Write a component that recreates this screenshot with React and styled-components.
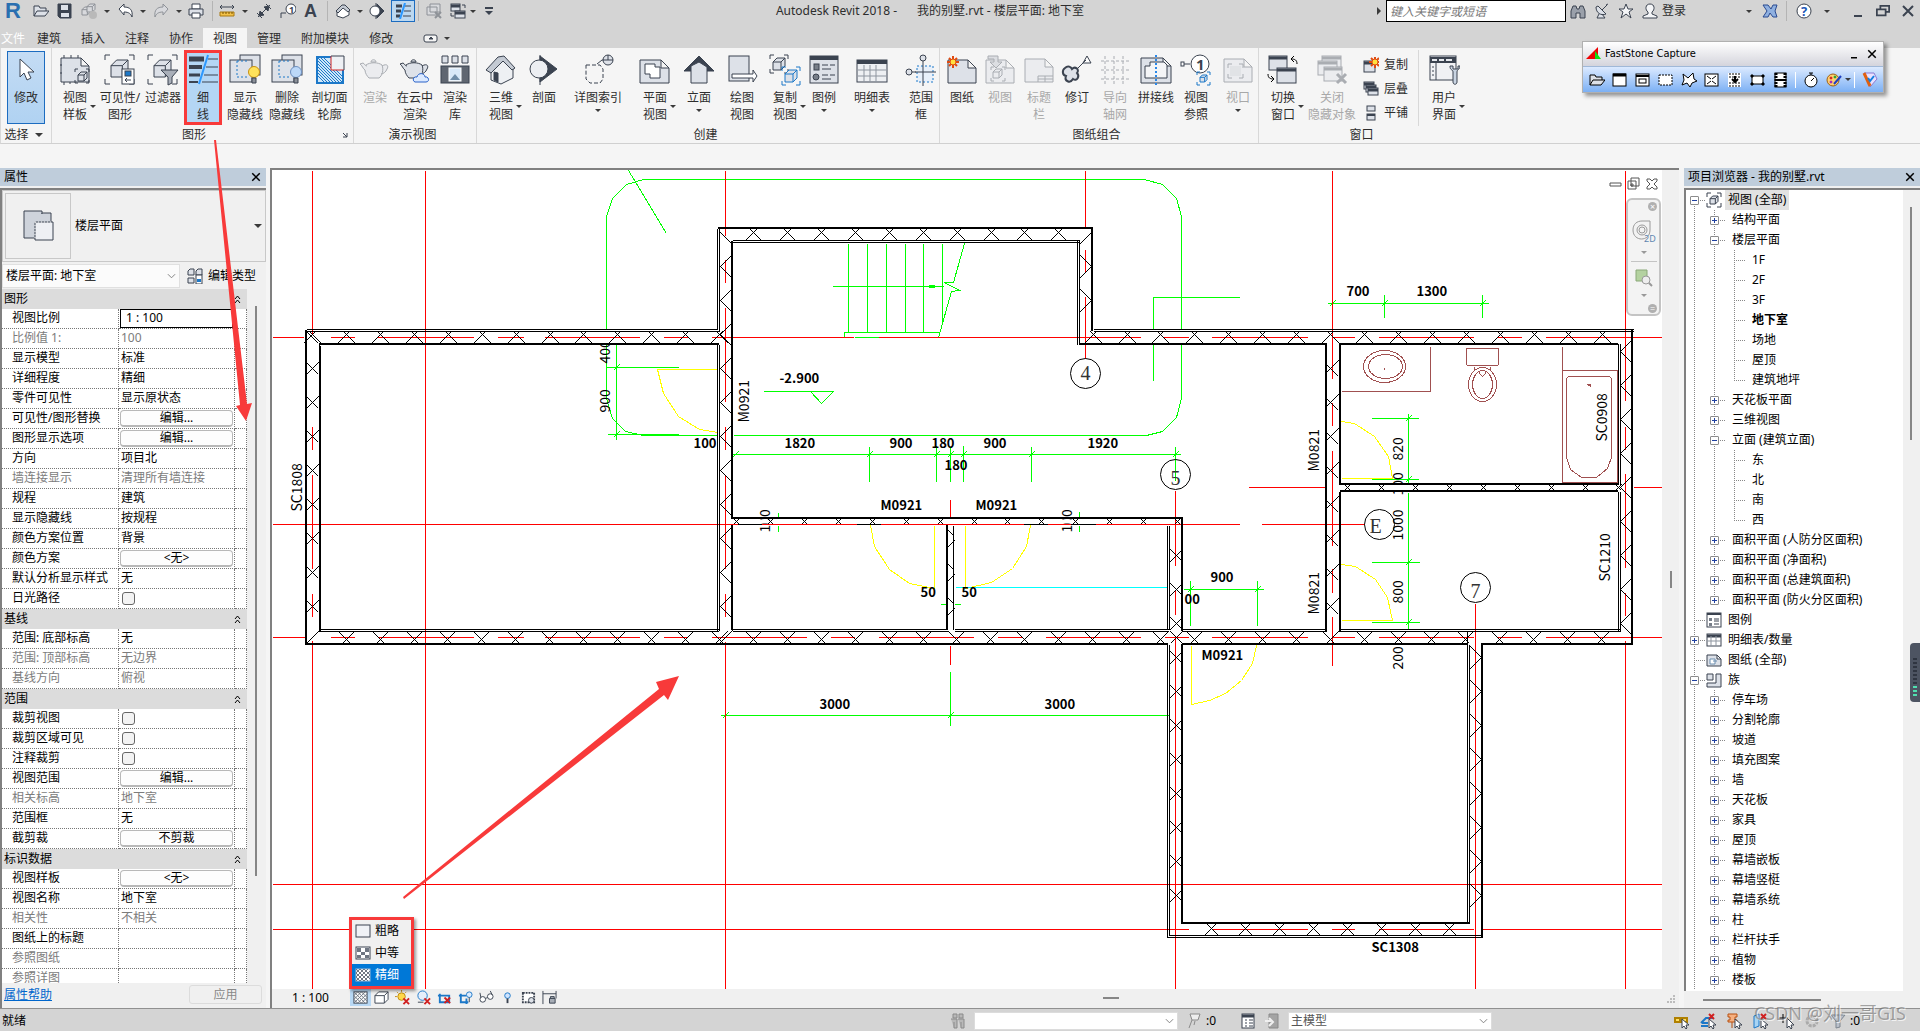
import { Fragment } from "react";
import styled, { createGlobalStyle, css } from "styled-components";

const INK = "#3b4350";
const FILL = "#dde1e8";
const BLUE = "#1c78c8";
const RED = "#f83a3a";

/* ---------- icons ---------- */

const sun = (x, y) => (
  <g transform={`translate(${x} ${y})`}>
    <path d="M0-6V6M-6 0H6M-4-4 4 4M-4 4 4-4" stroke="#e04a10" strokeWidth="2" />
    <circle r="3" fill="#ffe040" stroke="#e04a10" />
  </g>
);
const sheet = (x, y, w, h) => (
  <path d={`M${x} ${y}h${w - 8}l8 8v${h - 8}h${-w}zM${x + w - 8} ${y}v8h8`} fill={FILL} />
);
const bulb = (fill) => (
  <g>
    <circle cx="25" cy="18" r="5.5" fill={fill} stroke={fill === "#ffe25a" ? "#c89010" : "#6d8fc0"} />
    <path d="M23 24h4v5h-4z" fill="#8a8f98" />
  </g>
);
const corners = (x, y, w, h, s) => (
  <path
    d={`M${x} ${y + s}v${-s}h${s}M${x + w - s} ${y}h${s}v${s}M${x + w} ${y + h - s}v${s}h${-s}M${x + s} ${y + h}h${-s}v${-s}`}
    fill="none"
  />
);
const cube = (x, y, s) => (
  <path
    d={`M${x} ${y + s / 3}l${s / 3} ${-s / 3}h${(s * 2) / 3}v${(s * 2) / 3}l${-s / 3} ${s / 3}h${(-s * 2) / 3}zM${x} ${y + s / 3}h${(s * 2) / 3}v${(s * 2) / 3}m0 ${(-s * 2) / 3}l${s / 3} ${-s / 3}`}
    fill={FILL}
  />
);
const win = (x, y, w, h) => (
  <g>
    <rect x={x} y={y} width={w} height={h} fill={FILL} />
    <path d={`M${x} ${y + 2}h${w}`} strokeWidth="3" />
  </g>
);
const teapot = (
  <path d="M7 11c4-3 12-3 16 0 2 5 0 11-3 13H10C8 22 6 19 6 16 4 15 3 11 1 10l3-1c2 1 2 3 4 3M23 12c5-3 7 0 5 3-1 3-4 5-6 5M12 8c0-3 5-3 5 0z" fill={FILL} />
);

const big = {
  cursor: <path d="M10 5v18l4-4 3 7 4-2-3-6h6z" fill="#fff" />,
  template: <>{sheet(2, 4, 28, 24)}<path d="M5 1v3M12 1v3M19 1v3M2 10v2M2 18v2M5 28v3M11 28v2" />{corners(16, 15, 14, 14, 3)}{cube(19, 18, 9)}</>,
  visibility: <>{corners(1, 1, 29, 29, 5)}{cube(7, 6, 17)}<rect x="18" y="15" width="12" height="15" fill="#fff" /><rect x="21" y="17" width="6" height="5" fill={BLUE} /><path d="M21 26h6m-6 0 2-2m-2 2 2 2" /></>,
  filter: <>{corners(1, 1, 29, 29, 5)}{cube(7, 6, 17)}<path d="M14 16h17l-6 7v6l-4 2v-8z" fill="#a9afb9" /></>,
  thin: <><path d="M2 5h15" strokeWidth="5" /><path d="M2 13h13" strokeWidth="4" /><path d="M2 21h11" strokeWidth="3" /><path d="M2 28h9" strokeWidth="2" /><path d="M21 5h10M19 13h12M17 21h14M15 28h16" /><path d="M21 1 12 30" stroke="#2b98ff" strokeWidth="2" /></>,
  showHidden: <><rect x="11" y="1" width="20" height="20" fill={FILL} /><rect x="1" y="6" width="22" height="22" fill={FILL} /><path d="M8 7v16h12M8 7h12" strokeDasharray="2 2" stroke={BLUE} />{bulb("#ffe25a")}</>,
  removeHidden: <><rect x="11" y="1" width="20" height="20" fill={FILL} /><rect x="1" y="6" width="22" height="22" fill={FILL} /><path d="M8 7v16h12M8 7h12" strokeDasharray="2 2" stroke={BLUE} />{bulb("#bcd8f8")}</>,
  cutProfile: <><rect x="3" y="3" width="26" height="26" fill="#cfe6f8" stroke={BLUE} strokeWidth="2" /><path d="M4 10 22 28M4 4 28 28M4 16 16 28M4 22 10 28M10 4 28 22M4 7 25 28M4 13 19 28M4 19 13 28M7 4 28 25" stroke={BLUE} /><path d="M17 2h13v14H17z" fill="#eef0f4" stroke="none" /><path d="M17 2v14h13" stroke="#d02020" /><path d="M17 2h13v14" fill="none" /></>,
  teapot,
  cloud: <>{teapot}<path d="M16 28c-3-1-2-6 2-5 1-5 8-4 8 0 4-1 5 5 1 5z" fill="#dbe9ff" stroke="#2a62c8" /></>,
  gallery: <><path d="M3 2h6v7H3zM13 2h6v7h-6zM23 2h6v7h-6z" fill={FILL} /><rect x="2" y="12" width="28" height="17" fill="#5f6671" /><rect x="10" y="14" width="12" height="13" fill="#d8e8f8" stroke="#fff" /><path d="m11 26 5-6 5 6z" fill="#6f8ca8" stroke="none" /></>,
  house: <><path d="M6 15v11l10 4 12-6V13L18 6z" fill="#eef0f3" /><path d="M1 16 13 3l6-1 11 12-3 2-9-9-12 12z" fill="#c4cad3" /><path d="M9 18l4 1v9l-4-2z" fill={INK} /></>,
  section: <><path d="M12 1v30M12 2l17 13-17 13z" fill={INK} /><circle cx="11" cy="15" r="9" fill="#eceef2" /></>,
  callout: <><path d="M4 11h14l3 4v10l-3 4H8l-4-4z" fill="none" strokeDasharray="4 2" /><path d="M15 10l5-4h4" fill="none" /><circle cx="26" cy="6" r="5" fill={FILL} /><path d="M21 6h10M26 1v5" /></>,
  plan: <>{sheet(1, 6, 29, 23)}<path d="M6 10h10v3h5v11H11v-4H6z" fill="#fff" /></>,
  elevation: <><path d="M1 17 16 2l15 15z" fill={INK} /><path d="M8 17V12l8-4 8 5v16H8z" fill={FILL} /></>,
  drafting: <><rect x="3" y="2" width="20" height="25" fill={FILL} /><path d="M6 20h21v-4l4 6-4 6v-4H6z" fill="#fff" /></>,
  copyView: <>{corners(1, 1, 18, 18, 4)}{cube(4, 4, 12)}<g stroke={BLUE}>{corners(13, 13, 18, 18, 4)}{cube(16, 16, 12)}</g></>,
  legend: <><rect x="2" y="2" width="28" height="27" fill={FILL} /><path d="M2 4h28" strokeWidth="4" /><rect x="6" y="10" width="5" height="6" fill="#777e89" /><circle cx="8" cy="23" r="3" fill="#777e89" /><path d="M14 11h6m2 0h5M14 15h9M14 21h6m2 0h5M14 25h9" /></>,
  schedule: <><rect x="1" y="6" width="30" height="22" fill="#eef0f3" /><path d="M1 8h30" strokeWidth="4" /><path d="M2 16h28M2 22h28M8 11v17M20 11v17M14 11v17" stroke="#8e959f" /></>,
  scopeBox: <><rect x="12" y="12" width="16" height="16" fill="#e8f0fa" stroke={BLUE} strokeDasharray="2 2" /><path d="M18 10v22M10 18h21M18 6v4M7 18h4" /><circle cx="18" cy="4" r="3" fill={FILL} /><circle cx="4" cy="18" r="3" fill={FILL} /></>,
  newSheet: <>{sheet(2, 6, 28, 23)}{sun(7, 8)}</>,
  placeView: <>{sheet(2, 6, 28, 23)}<path d="M4 2h10v6h4l-6 6-6-6h4V5H4z" fill="#b9bec6" />{corners(7, 13, 14, 14, 3)}{cube(9, 15, 9)}</>,
  titleBlock: <>{sheet(2, 5, 28, 23)}<path d="M15 22h15M15 22v6M22 22v6M15 25h15" /></>,
  revision: <><path d="M4 14c3-3 6-1 7 1 3-3 8 0 5 4 3 3 0 9-4 6-3 5-9 2-7-3-4-1-4-6-1-8z" fill={FILL} strokeWidth="2" /><path d="M16 15 25 6M22 9l4-7 4 7z" fill="#fff" /></>,
  guideGrid: <path d="M6 2v28M15 2v28M24 2v28M2 7h28M2 16h28M2 25h28" strokeDasharray="3 2" />,
  matchline: <>{sheet(1, 4, 30, 25)}<path d="M5 24V12h5V8h14l3 3v13z" fill="#f4f5f7" /><path d="M16 1v30" stroke="#2b88e8" strokeDasharray="2 2" strokeWidth="2" /></>,
  viewRef: <><path d="M1 10h9" /><rect x="1" y="8" width="3" height="4" fill="#fff" /><circle cx="20" cy="10" r="9" fill="#fff" /><text x="16" y="16" fontSize="15" fontWeight="700" fill={INK} stroke="none">1</text><g stroke={BLUE}>{corners(17, 18, 13, 13, 3)}{cube(20, 21, 7)}</g></>,
  viewport: <>{sheet(2, 5, 28, 23)}{corners(6, 10, 15, 14, 4)}<rect x="8" y="12" width="11" height="10" fill="#c5cad2" stroke="none" /></>,
  switchWin: <>{win(2, 2, 18, 14)}{win(10, 14, 19, 15)}<path d="M30 10c0-4-2-5-6-5m0 0 3-3m-3 3 3 3M1 20c0 4 2 5 6 5m0 0-3-3m3 3-3 3" fill="none" stroke="#000" /></>,
  closeHidden: <>{win(6, 2, 19, 14)}{win(2, 7, 19, 14)}{win(8, 13, 18, 14)}<path d="m21 20 9 9m0-9-9 9" strokeWidth="3" /></>,
  userUi: <><rect x="2" y="2" width="26" height="24" fill="#f0f1f4" /><path d="M2 6h26" strokeWidth="6" /><path d="M4 6h5m2 0h5m2 0h6" stroke="#e6e9ee" strokeWidth="2" /><path d="M8 9v17M4 13h2M4 17h2M4 21h2" /><path d="M22 12c0 5 3 3 3 6v10c0 3 4 3 4 0V18c0-3 3-2 3-6h-2v3h-5v-3z" fill="#c9d4e2" /></>,
  floorPlan: <><path d="M2 1h18v27H2z" fill="#ced3db" /><path d="M20 3h9v10h-9z" fill="#ced3db" /><path d="M20 4v8" stroke="#ced3db" strokeWidth="2" /><path d="M13 12h18v18H13z" fill="#eef0f4" /><path d="M13 12h18M13 12v16" stroke="#fff" strokeDasharray="1 2" /></>,
};

const small = {
  open: <path d="M1 13V3h5l1 2h6v3M1 13 4 8h12l-4 5z" fill={FILL} />,
  save: <><path d="M1 1h13v14H3l-2-2z" fill={INK} /><path d="M4 2h7v5H4z" fill={FILL} stroke="none" /><path d="M4 10h8v4H4z" fill={FILL} stroke="none" /></>,
  sync: <>{cube(1, 4, 8)}{cube(6, 1, 8)}<circle cx="12" cy="12" r="4" fill="#999" stroke="none" /></>,
  undo: <path d="M1 6l5-5v3c6 0 9 3 8 10-1-3-3-5-8-5v3z" fill="#fff" />,
  redo: <path d="M15 6l-5-5v3C4 4 1 7 2 14c1-3 3-5 8-5v3z" fill={FILL} />,
  print: <><path d="M4 1h8v5H4z" fill="#fff" /><path d="M1 6h14v6H1z" fill={FILL} /><path d="M4 10h8v5H4z" fill="#fff" /></>,
  measure: <><path d="M1 4h14M3 2 1 4l2 2M13 2l2 2-2 2" fill="none" /><path d="M1 9h14v4H1z" fill="#f3c24a" stroke="#a87810" /><path d="M4 9v2M7 9v2M10 9v2M13 9v2" stroke="#7a5400" /></>,
  dim: <path d="M2 14 14 2M1 10l5 5M10 1l5 5M3 13l1-5 4 4zM13 3l-1 5-4-4z" fill={INK} />,
  tag: <><path d="M1 15v-5h5" fill="none" /><circle cx="11" cy="6" r="5" fill="#fff" /><text x="9" y="10" fontSize="9" fontWeight="700" fill={INK} stroke="none">1</text></>,
  house: <><path d="M2 8v5l6 2 6-3V7L9 4z" fill="#fff" /><path d="M1 8l6-6h3l5 5-2 2-5-4-5 5z" fill="#c4cad3" /></>,
  section: <><path d="M7 0v16M8 1l7 7-7 7z" fill={INK} /><circle cx="6" cy="8" r="5" fill="#fff" /></>,
  thin: <><path d="M1 3h6M1 8h5M1 13h4" strokeWidth="3" /><path d="M10 3h6M9 8h7M8 13h8" /><path d="M10 0 5 16" stroke="#2b98ff" strokeWidth="2" /></>,
  closeHidden: <><path d="M4 1h10v8H4zM1 4h10v8H1z" fill={FILL} /><path d="m9 9 6 6m0-6-6 6" strokeWidth="2" /></>,
  switchWin: <>{win(1, 1, 9, 7)}{win(5, 8, 10, 7)}<path d="M15 5V2h-3M1 10v3h3" fill="none" /></>,
  customize: <><path d="M4 5h8" strokeWidth="2" /><path d="M4 8h8l-4 4z" fill={INK} stroke="none" /></>,
  binoculars: <path d="M1 8 3 3h3l1 3h2l1-3h3l2 5v7h-5v-5H6v5H1z" fill="#9aa0aa" />,
  dish: <path d="M2 4c0 6 5 9 10 7L4 3zM8 7l5-5M14 1l-2 1M5 11l-2 4h8l-3-4" fill={FILL} />,
  star: <path d="M8 1l2 5h5l-4 3 2 6-5-4-5 4 2-6-4-3h5z" fill="#f4f5f7" />,
  user: <path d="M8 1c5 0 5 6 2 8v2l5 2v2H1v-2l5-2V9C3 7 3 1 8 1z" fill="#f4f5f7" />,
  exchange: <path d="M1 2h5l3 4 2-4h4l-2 6 2 6h-4L8 10l-2 4H1l4-6z" fill="#8fb0e0" stroke="#2a4a90" />,
  help: <><circle cx="8" cy="8" r="7" fill="#fff" /><text x="5" y="13" fontSize="13" fontWeight="700" fill="#1c58b8" stroke="none">?</text></>,
  min: <path d="M4 13h8" strokeWidth="2" />,
  restore: <><path d="M5 6V2h10v7h-4" fill="none" strokeWidth="2" /><path d="M1 6h10v7H1z" fill="none" strokeWidth="2" /></>,
  close: <path d="m3 3 10 10M13 3 3 13" strokeWidth="2" />,
  newWin: <>{win(1, 4, 11, 11)}{sun(12, 5)}</>,
  cascade: <>{win(1, 1, 10, 7)}{win(3, 4, 10, 7)}{win(5, 7, 10, 7)}</>,
  tile: <><rect x="4" y="1" width="8" height="5" fill={FILL} /><rect x="4" y="9" width="8" height="6" fill={FILL} /><path d="M4 10h8" strokeWidth="2" /></>,
  editType: <><path d="M1 3l2-2h4v6H1zM9 3l2-2h4v6H9zM1 10h6v5H1z" fill={FILL} /><rect x="9" y="7" width="6" height="9" fill="#fff" /><path d="M10 11h4v3h-4z" fill={BLUE} stroke="none" /></>,
  views: <>{corners(1, 1, 14, 14, 4)}{cube(4, 4, 8)}</>,
  legend: <><rect x="1" y="1" width="14" height="14" fill="#fff" /><path d="M1 2h14" strokeWidth="2" /><path d="M3 6h3v3H3zM3 11h3v3H3z" fill="#777e89" stroke="none" /><path d="M8 7h5M8 9h5M8 12h5" /></>,
  schedule: <><rect x="1" y="2" width="14" height="12" fill="#fff" /><path d="M1 4h14" strokeWidth="3" /><path d="M1 9h14M5 4v10M10 4v10" stroke="#8e959f" /></>,
  sheets: <><path d="M1 3h10l4 4v7H1zM11 3v4h4" fill={FILL} /><path d="M4 12V7h5v5zM7 9h4" fill="#fff" stroke="#6d8fb0" /></>,
  family: <path d="M1 2h6v6H1zM10 2h5v13H1v-4h9z" fill={FILL} />,
  coarse: <rect x="1" y="2" width="14" height="12" fill="#f0f2f6" />,
  medium: <><rect x="1" y="2" width="14" height="12" fill="#fff" /><path d="M2 3h4v4H2zM10 3h4v4h-4zM6 7h4v3H6zM2 10h4v3H2zM10 10h4v3h-4z" fill="#6f7682" stroke="none" /></>,
  fine: <><rect x="1" y="2" width="14" height="12" fill="#fff" /><path d="M1 6l4-4M1 10l8-8M1 14 13 2M5 14l10-10M9 14l6-6M1 10l4 4M1 6l8 8M1 2l12 12M5 2l10 10M9 2l6 6" stroke="#6f7682" /></>,
  boxStyle: <path d="M1 6l4-4h10v8l-4 4H1zM1 6h10v8M11 6l4-4" fill="#fff" />,
  sunOff: <><circle cx="7" cy="7" r="4" fill="#ffd84a" stroke="#c08a10" /><path d="M7 0v2M0 7h2M2 2l1 1M12 2l-1 1" stroke="#c08a10" /><path d="m9 9 6 6m0-6-6 6" stroke="#d02020" strokeWidth="2" /></>,
  shadowOff: <><circle cx="7" cy="6" r="5" fill="#e6eefa" stroke={BLUE} /><path d="M2 13h6" /><path d="m9 9 6 6m0-6-6 6" stroke="#d02020" strokeWidth="2" /></>,
  cropOff: <><path d="M3 4v9h9M1 6h12v8" fill="none" stroke={BLUE} strokeWidth="2" /><path d="m8 8 6 6m0-6-6 6" stroke="#d02020" strokeWidth="2" /></>,
  cropShow: <><path d="M3 4v9h8M1 6h8M9 9v6" fill="none" stroke={BLUE} strokeWidth="2" /><circle cx="12" cy="5" r="3" fill="#dcecff" stroke={BLUE} /><path d="M12 8v5" /></>,
  glasses: <><circle cx="4" cy="10" r="3" fill="#fff" /><circle cx="12" cy="7" r="3" fill="#fff" /><path d="M7 9l2-1M2 8 1 3M14 5l-2-4" /></>,
  bulb: <><circle cx="8" cy="6" r="3" fill="#cfe4ff" stroke={BLUE} /><path d="M8 9v5" strokeWidth="2" /></>,
  tempView: <><rect x="2" y="3" width="12" height="10" fill="#fff" strokeWidth="2" strokeDasharray="2 1" /><circle cx="11" cy="11" r="3" fill={FILL} /></>,
  constraint: <><path d="M1 1v14M15 1v8M1 4h14" fill="none" /><path d="M8 9h6v5H8zM9 9V7h4v2" fill="#a7adb6" /></>,
  worker: <path d="M3 1h4v4H3zM9 1h4v4H9zM1 6h6v9H4M8 6h6v9h-3M4 9v6M11 9v6" fill="#b8b8b8" stroke="#8a8a8a" />,
  options: <><rect x="2" y="1" width="12" height="14" fill="#fff" /><path d="M2 3h12" strokeWidth="3" /><path d="M5 7h2M9 7h4M5 10h2M9 10h4M5 13h2M9 13h4" /></>,
  grayPage: <><path d="M5 1h9v14H5z" fill="#a4a4a4" stroke="#8a8a8a" /><path d="M1 8h6M5 5l4 4-4 4" fill="none" stroke="#f0f0f0" strokeWidth="2" /></>,
  flag: <path d="M4 1h10l-2 6H6zM6 7l-3 8M9 8l-1 4" fill="#eee" stroke="#8a8a8a" />,
  selLink: <><path d="M1 5h5v4H1zM8 5h5v4H8zM5 7h4" fill="#ffe060" stroke="#b08000" strokeWidth="2" /><path d="M8 6v9l2-2 2 3 1-1-1-3h3z" fill="#fff" /></>,
  selUnder: <><path d="M1 10l5-5h7M1 13h7M2 10h6" fill="none" stroke={BLUE} strokeWidth="2" /><path d="m9 1 5 5m0-5-5 5" stroke="#d02020" strokeWidth="2" /><path d="M9 6v9l2-2 2 3 1-1-1-3h3z" fill="#fff" /></>,
  selPin: <><path d="M2 1h9v3H9v3h2v2H2V7h2V4H2zM6 9v6" fill="#f6b080" stroke="#b85010" /><path d="M9 6v9l2-2 2 3 1-1-1-3h3z" fill="#fff" /></>,
  selFace: <><path d="M2 3l5-2v12l-5 2z" fill="#a8d4f4" stroke={BLUE} /><path d="m9 1 5 5m0-5-5 5" stroke="#d02020" strokeWidth="2" /><path d="M9 6v9l2-2 2 3 1-1-1-3h3z" fill="#fff" /></>,
  selDrag: <><path d="M5 1v9M1 5h9" stroke="#000" /><path d="M9 5v10l2-2 2 3 1-1-1-3h3z" fill="#fff" /></>,
  gear: <circle cx="8" cy="8" r="5" fill="none" stroke="#aaa" strokeWidth="3" strokeDasharray="3 1" />,
  funnel: <path d="M1 2h14l-5 6v6l-4 1V8z" fill="#b9c0ca" stroke="#7d8590" />,
  cWindow: <><rect x="1" y="2" width="13" height="12" fill="#fff" /><path d="M1 3h13" strokeWidth="3" /></>,
  cObject: <><rect x="1" y="2" width="13" height="12" fill="#fff" /><path d="M1 4h13" strokeWidth="2" /><rect x="4" y="7" width="7" height="4" fill="none" /></>,
  cRect: <rect x="1" y="3" width="13" height="10" fill="#fff" strokeDasharray="2 1" />,
  cFree: <path d="M2 2l5 4 5-5 1 6 3 2-5 2-2 4-3-4-5 2 2-5z" fill="#fff" />,
  cFull: <><rect x="1" y="2" width="13" height="12" fill="#fff" /><path d="M3 4l4 3M12 4 8 7M3 12l4-3M12 12 8 9" /></>,
  cScroll: <><rect x="1" y="1" width="13" height="14" fill="#fff" stroke="none" /><path d="M2 2h11M2 5h11M2 11h11M2 14h11" strokeDasharray="2 1" /><path d="M8 4v6m-3-3 3 3 3-3" strokeWidth="2" fill="none" /></>,
  cFixed: <><rect x="2" y="4" width="11" height="8" fill="#fff" /><path d="M1 3h2v2H1zM12 3h2v2h-2zM1 11h2v2H1zM12 11h2v2h-2z" fill="#000" /></>,
  cVideo: <><rect x="2" y="1" width="11" height="14" fill="#fff" /><path d="M3 1v14M12 1v14" strokeWidth="3" strokeDasharray="2 1" /><path d="M4 8h7" strokeWidth="2" /></>,
  cTimer: <><circle cx="8" cy="9" r="6" fill="#fff" /><path d="M8 9l3-3M6 1h4M8 1v2" /></>,
  cPalette: <><circle cx="7" cy="8" r="6" fill="#ffd070" stroke="#a06010" /><circle cx="5" cy="6" r="1" fill="#d02020" stroke="#d02020" /><circle cx="9" cy="5" r="1" fill="#20a030" stroke="#20a030" /><circle cx="5" cy="10" r="1" fill="#a020c0" stroke="#a020c0" /><path d="M8 12 15 4" stroke="#2040c0" strokeWidth="2" /></>,
  cSettings: <><path d="M2 1h10l3 6-7 8z" fill="#e8e0ff" stroke="#8a7ad0" /><path d="M2 1 8 14" stroke="#e06010" strokeWidth="3" /><path d="M6 6l2 3 4-5" fill="none" stroke="#1080e0" strokeWidth="2" /></>,
};

function Icon({ name, size = 16, color = INK }) {
  const box = size > 20 ? 32 : 16;
  return (
    <svg width={size} height={size} viewBox={`0 0 ${box} ${box}`} stroke={color} fill="none" aria-hidden="true">
      {box === 32 ? big[name] : small[name]}
    </svg>
  );
}

/* ---------- data ---------- */

const quickAccess = [
  { icon: "open", w: 26 },
  { icon: "save", w: 22 },
  { icon: "sync", w: 26, off: true },
  { caret: true, w: 10 },
  { icon: "undo", w: 27 },
  { caret: true, w: 8 },
  { icon: "redo", w: 28, off: true },
  { caret: true, w: 8 },
  { icon: "print", w: 26 },
  { sep: true },
  { icon: "measure", w: 28 },
  { caret: true, w: 8 },
  { icon: "dim", w: 30 },
  { icon: "tag", w: 18 },
  { letter: true, w: 27 },
  { sep: true },
  { icon: "house", w: 29 },
  { caret: true, w: 6 },
  { icon: "section", w: 28 },
  { icon: "thin", w: 24, active: true },
  { sep: true },
  { icon: "closeHidden", w: 30, off: true },
  { icon: "switchWin", w: 18 },
  { caret: true, w: 12 },
  { icon: "customize", w: 20 },
];

const tabs = ["建筑", "插入", "注释", "协作", "视图", "管理", "附加模块", "修改"];

const groups = [
  {
    title: "图形",
    launcher: true,
    tools: [
      { icon: "template", text: ["视图", "样板"], w: 46, side: true },
      { icon: "visibility", text: ["可见性/", "图形"], w: 44 },
      { icon: "filter", text: ["过滤器"], w: 42 },
      { icon: "thin", text: ["细", "线"], w: 38, marked: true },
      { icon: "showHidden", text: ["显示", "隐藏线"], w: 46 },
      { icon: "removeHidden", text: ["删除", "隐藏线"], w: 38 },
      { icon: "cutProfile", text: ["剖切面", "轮廓"], w: 47 },
    ],
  },
  {
    title: "演示视图",
    tools: [
      { icon: "teapot", text: ["渲染"], w: 42, off: true },
      { icon: "cloud", text: ["在云中", "渲染"], w: 38 },
      { icon: "gallery", text: ["渲染", "库"], w: 42 },
    ],
  },
  {
    title: "创建",
    tools: [
      { icon: "house", text: ["三维", "视图"], w: 48, side: true },
      { icon: "section", text: ["剖面"], w: 38 },
      { icon: "callout", text: ["详图索引"], w: 70, below: true },
      { icon: "plan", text: ["平面", "视图"], w: 44, side: true },
      { icon: "elevation", text: ["立面"], w: 44, below: true },
      { icon: "drafting", text: ["绘图", "视图"], w: 42 },
      { icon: "copyView", text: ["复制", "视图"], w: 44, side: true },
      { icon: "legend", text: ["图例"], w: 34, below: true },
      { icon: "schedule", text: ["明细表"], w: 62, below: true },
      { icon: "scopeBox", text: ["范围", "框"], w: 36 },
    ],
  },
  {
    title: "图纸组合",
    tools: [
      { icon: "newSheet", text: ["图纸"], w: 44 },
      { icon: "placeView", text: ["视图"], w: 32, off: true },
      { icon: "titleBlock", text: ["标题", "栏"], w: 46, off: true },
      { icon: "revision", text: ["修订"], w: 30 },
      { icon: "guideGrid", text: ["导向", "轴网"], w: 46, off: true },
      { icon: "matchline", text: ["拼接线"], w: 36 },
      { icon: "viewRef", text: ["视图", "参照"], w: 44 },
      { icon: "viewport", text: ["视口"], w: 40, off: true, below: true },
    ],
  },
  {
    title: "窗口",
    last: true,
    tools: [
      { icon: "switchWin", text: ["切换", "窗口"], w: 48, side: true },
      { icon: "closeHidden", text: ["关闭", "隐藏对象"], w: 50, off: true },
      { list: [["newWin", "复制"], ["cascade", "层叠"], ["tile", "平铺"]] },
      { icon: "userUi", text: ["用户", "界面"], w: 50, side: true },
    ],
  },
];

const properties = [
  {
    title: "图形",
    rows: [
      ["视图比例", "1 : 100", "field"],
      ["比例值 1:", "100", "off"],
      ["显示模型", "标准"],
      ["详细程度", "精细"],
      ["零件可见性", "显示原状态"],
      ["可见性/图形替换", "编辑...", "button"],
      ["图形显示选项", "编辑...", "button"],
      ["方向", "项目北"],
      ["墙连接显示", "清理所有墙连接", "off"],
      ["规程", "建筑"],
      ["显示隐藏线", "按规程"],
      ["颜色方案位置", "背景"],
      ["颜色方案", "<无>", "button"],
      ["默认分析显示样式", "无"],
      ["日光路径", "", "check"],
    ],
  },
  {
    title: "基线",
    rows: [
      ["范围: 底部标高", "无"],
      ["范围: 顶部标高", "无边界", "off"],
      ["基线方向", "俯视", "off"],
    ],
  },
  {
    title: "范围",
    rows: [
      ["裁剪视图", "", "check"],
      ["裁剪区域可见", "", "check"],
      ["注释裁剪", "", "check"],
      ["视图范围", "编辑...", "button"],
      ["相关标高", "地下室", "off"],
      ["范围框", "无"],
      ["截剪裁", "不剪裁", "button"],
    ],
  },
  {
    title: "标识数据",
    rows: [
      ["视图样板", "<无>", "button"],
      ["视图名称", "地下室"],
      ["相关性", "不相关", "off"],
      ["图纸上的标题", ""],
      ["参照图纸", "", "off"],
      ["参照详图", "", "off"],
    ],
  },
];

// level, label, expander, icon
const tree = [
  [0, "视图 (全部)", "-", "views"],
  [1, "结构平面", "+"],
  [1, "楼层平面", "-"],
  [2, "1F"],
  [2, "2F"],
  [2, "3F"],
  [2, "地下室"],
  [2, "场地"],
  [2, "屋顶"],
  [2, "建筑地坪"],
  [1, "天花板平面", "+"],
  [1, "三维视图", "+"],
  [1, "立面 (建筑立面)", "-"],
  [2, "东"],
  [2, "北"],
  [2, "南"],
  [2, "西"],
  [1, "面积平面 (人防分区面积)", "+"],
  [1, "面积平面 (净面积)", "+"],
  [1, "面积平面 (总建筑面积)", "+"],
  [1, "面积平面 (防火分区面积)", "+"],
  [0, "图例", "", "legend"],
  [0, "明细表/数量", "+", "schedule"],
  [0, "图纸 (全部)", "", "sheets"],
  [0, "族", "-", "family"],
  ...["停车场", "分割轮廓", "坡道", "填充图案", "墙", "天花板", "家具", "屋顶", "幕墙嵌板", "幕墙竖梃", "幕墙系统", "柱", "栏杆扶手", "植物", "楼板"].map((t) => [1, t, "+"]),
];

/* ---------- floor plan ---------- */

const redLines = [
  // direction, position, [from, to], ...
  ["v", 312, [170, 333], [426, 449], [474, 568], [593, 616], [640, 990]],
  ["v", 425, [170, 990]],
  ["v", 725, [170, 235], [259, 282], [307, 401], [426, 449], [474, 568], [593, 616], [641, 990]],
  ["v", 950, [499, 517], [645, 664]],
  ["v", 1085, [170, 227], [249, 271], [296, 358]],
  ["v", 1175, [490, 565], [590, 614], [637, 990]],
  ["v", 1332, [170, 378], [402, 425], [450, 545], [568, 592], [616, 665]],
  ["v", 1475, [603, 990]],
  ["v", 1625, [170, 400], [426, 449], [473, 567], [592, 615], [640, 990]],
  ["h", 337, [272, 303], [330, 354], [377, 473], [497, 523], [544, 639], [663, 687], [711, 853], [878, 1140], [1163, 1188], [1211, 1307], [1331, 1354], [1378, 1473], [1497, 1521], [1545, 1662]],
  ["h", 637, [272, 306], [330, 354], [377, 473], [497, 523], [544, 639], [663, 687], [711, 806], [830, 854], [878, 973], [997, 1021], [1045, 1140], [1164, 1188], [1211, 1307], [1331, 1354], [1378, 1473], [1497, 1521], [1545, 1662]],
  ["h", 487, [1248, 1326], [1633, 1662]],
  ["h", 524, [272, 737], [761, 856], [880, 1023], [1047, 1070], [1095, 1239], [1261, 1364]],
  ["h", 884, [272, 1662]],
  ["h", 929, [272, 1188], [1211, 1307], [1331, 1354], [1378, 1473], [1482, 1662]],
];

const thickWalls =
  "M306 330V644H1168M319 344H719M718 228H1092V331M732 241V518H1182V631M732 525V630M1079 344H1326V631M1339 344H1618" +
  "M1632 330V644H1482V937M1182 644H1467M1340 484H1618M1340 491H1618M947 525V630M1182 644V923H1470";
const thinWalls =
  "M306 329H717V228M306 331H719V228M319 343V630M320 345V630M318 629H718M318 631H718M717 344V630M719 344V630" +
  "M732 240H1079V242H732M1077 240V344M1079 242V344M1093 329H1633M1093 331H1633M1618 343V484M1620 343V484M1618 491V631M1620 491V631" +
  "M1339 343V484M1340 343V484M1339 491V631M1340 491V631M1182 629H1326M1182 631H1326M1339 629H1619M1339 631H1619" +
  "M732 629H947M732 631H947M954 629H1168M954 631H1168M953 525V629M1167 525V629M1169 525V629M1167 644V937H1482M1169 644V935H1481" +
  "M1467 630V923M1469 644V923M737 524H761M856 524H880M1023 524H1047M1070 524H1095";

// a run of 45-degree hatch crosses centred on (x, y), reaching a and b to either side
const runs = [
  { n: 13, x: 312, y: 334, dx: 33.93, a: 3, b: 9 },
  { n: 16, x: 1092.6, y: 334, dx: 33.93, a: 3, b: 9 },
  { n: 10, x: 753, y: 232, dx: 33.93, a: 4, b: 8 },
  { n: 38, x: 345.7, y: 639, dx: 33.93, a: 8, b: 4 },
  { n: 14, x: 736, y: 521, dx: 33.93, a: 3, b: 3 },
  { n: 9, x: 1347, y: 487, dx: 33.93, a: 3, b: 3 },
  { n: 8, x: 1211, y: 928, dx: 33.93, a: 5, b: 7 },
  { n: 8, x: 312, y: 368, dy: 34, a: 6, b: 6 },
  { n: 11, x: 720, y: 266, dy: 34, a: 0, b: 12 },
  { n: 2, x: 1091, y: 266, dy: 34, a: 12, b: 0 },
  { n: 3, x: 956, y: 538, dy: 34, a: 9, b: 0, clip: 2 },
  { n: 3, x: 1176, y: 555, dy: 34, a: 7, b: 5 },
  { n: 8, x: 1176, y: 657, dy: 34, a: 7, b: 5 },
  { n: 8, x: 1330, y: 368, dy: 34, a: 4, b: 8 },
  { n: 9, x: 1620, y: 351, dy: 34, a: 0, b: 12 },
  { n: 8, x: 1481, y: 657, dy: 34, a: 12, b: 0 },
];

function hatch({ n, x, y, dx, dy = 0, a, b, clip = 0 }) {
  let d = "";
  for (let i = 0; i < n; i += 1) {
    const cx = Math.round(x + i * (dx || 0));
    const cy = y + i * dy;
    if (dx) {
      d += `M${cx - a} ${cy - a}L${cx + b} ${cy + b}M${cx + a} ${cy - a}L${cx - b} ${cy + b}`;
    } else {
      d += `M${cx - a} ${cy - a}L${cx + b - clip} ${cy + b - clip}M${cx - a} ${cy + a}L${cx + b - clip} ${cy - b + clip}`;
    }
  }
  return d;
}

const greenPath =
  "M606 329V216L612 198 626 184 643 179H1144L1162 184 1176 198 1181 216V329M1181 344V398L1176 417 1162 431 1146 435H733M717 435H643L625 431 612 418 606 398V344" +
  "M628 170L666 233M616 344V439M606 367H678M607 434H678M763 391H833L821 403 810 391M733 454H1180" +
  "M869 446V481M936 445V481M950 446V481M963 445V481M1031 446V481M1175 446V480" +
  "M1153 329V297H1239M1153 344V380M832 286H943M848 243V332M867 243V332M886 243V332M905 243V332M923 243V332M942 243V323M844 337V332H939M854 337H878" +
  "M964 243L953 282H944L959 290 951 291 938 337M1327 303H1488M1384 294V317M1482 294V317" +
  "M1183 589H1263M1190 580V625M1257 580V625M1408 413V483M1408 492V629M1371 418H1418M1371 479H1418M1371 562H1419M1371 622H1419" +
  "M940 604H946M954 604H960M778 512V517M778 525V531M1079 511V517M1079 525V531M720 715H1168M950 671V725";
const greenTicks = [
  [616, 367], [616, 434], [735, 454], [869, 454], [936, 454], [950, 454], [963, 454], [1031, 454], [1175, 454],
  [1332, 303], [1384, 303], [1482, 303], [1190, 589], [1257, 589], [1408, 418], [1408, 479], [1408, 562], [1408, 622],
  [725, 715], [950, 715],
];
const doors =
  "M717 369H657L663 393 678 416 699 429 717 432M934 525V588L909 583 889 569 874 546 870 525M965 525V588L991 582 1012 568 1026 546 1030 525" +
  "M1191 645V704L1209 700 1225 693 1241 680 1252 663 1256 645M1341 421L1354 423 1374 436 1388 456 1392 478H1341M1341 564L1355 566 1375 579 1387 597 1392 620H1341";

const flatText = [
  [779, 382, "-2.900"], [693, 447, "100"], [784, 447, "1820"], [889, 447, "900"], [931, 447, "180"], [983, 447, "900"], [1087, 447, "1920"],
  [944, 469, "180"], [880, 509, "M0921"], [975, 509, "M0921"], [920, 596, "50"], [961, 596, "50"], [1210, 581, "900"], [1184, 603, "00"],
  [1201, 659, "M0921"], [1346, 295, "700"], [1416, 295, "1300"], [819, 708, "3000"], [1044, 708, "3000"], [1371, 951, "SC1308"],
];
const turnedText = [
  [301, 511, "SC1808"], [609, 363, "400"], [609, 412, "900"], [748, 422, "M0921"], [769, 532, "100"], [1071, 532, "100"], [1318, 471, "M0821"],
  [1318, 614, "M0821"], [1402, 460, "820"], [1402, 495, "100"], [1402, 540, "1000"], [1402, 603, "800"], [1402, 669, "200"], [1606, 441, "SC0908"], [1609, 581, "SC1210"],
];
const bubbles = [
  [1085, 373, "4", 0, 6], [1175, 474, "5", 0, 10], [1475, 587, "7", 0, 10], [1379, 524, "E", -4, 8],
];

function FloorPlan() {
  return (
    <PlanSvg role="img" aria-label="楼层平面: 地下室">
      <g transform="translate(-271.5 -169.5)" fill="none">
        <g shapeRendering="crispEdges">
          <path d={greenPath} stroke="#00ff00" />
          {greenTicks.map(([x, y]) => (
            <path key={`${x}-${y}`} d={`M${x - 3} ${y + 3}L${x + 3} ${y - 3}M${x - 5} ${y}H${x + 5}`} stroke="#00ff00" />
          ))}
          <path d="M928 286h6" stroke="#00ff00" strokeWidth="3" />
          <path d={doors} stroke="#ffff00" />
          <path d="M955 587H1167" stroke="#00ffff" />
        </g>
        <g fill="#000">
          {turnedText.map(([x, y, t]) => (
            <TurnedLabel key={`${x}-${y}`} transform={`translate(${x} ${y}) rotate(-90)`}>{t}</TurnedLabel>
          ))}
        </g>
        <g fill="#fff">
          <path d="M307 330H718V343H307zM733 519H1181V523H733zM1340 484H1618V491H1340zM1340 630H1618V643H1340z" />
        </g>
        <g shapeRendering="crispEdges">
          <g stroke="#ff0000">
            {redLines.map(([dir, at, ...spans]) => (
              <path key={`${dir}${at}`} d={spans.map(([p, q]) => (dir === "v" ? `M${at} ${p}V${q}` : `M${p} ${at}H${q}`)).join("")} />
            ))}
          </g>
          <g stroke="#a05050">
            <ellipse cx="1384" cy="366" rx="21" ry="16" />
            <ellipse cx="1385" cy="366" rx="17" ry="12" />
            <path d="M1384 367v2M1430 346V391H1341M1562 346V482H1617V370H1562M1587 384h3v2z" />
            <path d="M1466 348h32v15q0 2-2 2h-28q-2 0-2-2zM1474 366v3M1490 366v3" />
            <ellipse cx="1482" cy="384" rx="14" ry="17" />
            <ellipse cx="1482" cy="384" rx="10" ry="14" />
            <path d="M1479 370v3l3 3 3-3v-3" />
            <path d="M1566 379q0-3 3-3h39q3 0 3 3v78l-4 11-11 9h-15l-11-8-4-12z" />
          </g>
          <path d={runs.map(hatch).join("")} stroke="#000" />
          <path d="M306 331l12 12M306 643l12-12M719 231l13 13M1092 231l-13 13M719 643l13-13M1170 631l12 12M1182 631l-12 12" stroke="#000" />
          <path d={thinWalls} stroke="#000" />
          <path d={thickWalls} transform="translate(-.5 -.5)" stroke="#000" strokeWidth="2" />
        </g>
        {bubbles.map(([x, y, t, ox, oy]) => (
          <g key={t}>
            <circle cx={x} cy={y} r="15" stroke="#000" />
            <BubbleText x={x + ox} y={y + oy}>{t}</BubbleText>
          </g>
        ))}
        <g fill="#000">
          {flatText.map(([x, y, t]) => (
            <FlatLabel key={`${x}-${y}`} x={x} y={y}>{t}</FlatLabel>
          ))}
        </g>
      </g>
    </PlanSvg>
  );
}

/* ---------- parts ---------- */

function TitleBar() {
  return (
    <TopBar>
      <Logo>R</Logo>
      {quickAccess.map((q, i) =>
        q.sep ? (
          <BarLine key={i} />
        ) : (
          <BarButton key={i} $w={q.w} $active={q.active} disabled={q.off} aria-label={q.icon || "更多"}>
            {q.caret && <Caret />}
            {q.letter && <LetterIcon>A</LetterIcon>}
            {q.icon && <Icon name={q.icon} />}
          </BarButton>
        )
      )}
      <Title>
        <span>Autodesk Revit 2018 -</span>
        <span>我的别墅.rvt - 楼层平面: 地下室</span>
      </Title>
      <SearchMark />
      <Search type="text" aria-label="搜索" placeholder="键入关键字或短语" />
      {["binoculars", "dish", "star", "user"].map((n) => (
        <BarButton key={n} $w={24} aria-label={n}><Icon name={n} /></BarButton>
      ))}
      <SignIn>登录</SignIn>
      <BarButton $w={14} aria-label="帐户"><Caret /></BarButton>
      <BarButton $w={27} aria-label="exchange"><Icon name="exchange" /></BarButton>
      <BarLine />
      <BarButton $w={34} aria-label="帮助"><Icon name="help" /></BarButton>
      <HelpMenu aria-label="帮助菜单"><Caret /></HelpMenu>
      <WindowButton aria-label="最小化"><Icon name="min" /></WindowButton>
      <WindowButton aria-label="还原"><Icon name="restore" size={14} /></WindowButton>
      <WindowButton aria-label="关闭"><Icon name="close" /></WindowButton>
    </TopBar>
  );
}

function Tool({ tool }) {
  if (tool.list) {
    return (
      <ToolList>
        {tool.list.map(([icon, text]) => (
          <SmallTool key={text}><Icon name={icon} />{text}</SmallTool>
        ))}
      </ToolList>
    );
  }
  return (
    <ToolButton $w={tool.w} $marked={tool.marked} disabled={tool.off}>
      <Icon name={tool.icon} size={32} />
      <ToolText $side={tool.side}>
        <span>
          {tool.text.map((t) => <Fragment key={t}>{t}<br /></Fragment>)}
        </span>
        {tool.side && <Caret />}
      </ToolText>
      {tool.below && <BelowCaret><Caret /></BelowCaret>}
    </ToolButton>
  );
}

function Ribbon() {
  return (
    <RibbonBar>
      <Group>
        <Tools><Modify><Icon name="cursor" size={32} />修改</Modify></Tools>
        <GroupTitle>选择 <Caret $big /></GroupTitle>
      </Group>
      {groups.map((g) => (
        <Group key={g.title} $last={g.last}>
          <Tools>{g.tools.map((t) => <Tool key={t.icon || "list"} tool={t} />)}</Tools>
          <GroupTitle $launcher={g.launcher}>
            <span>{g.title}</span>
            {g.launcher && <Launcher viewBox="0 0 6 6"><path d="M1 1l4 4M5 1v4H1" /></Launcher>}
          </GroupTitle>
        </Group>
      ))}
    </RibbonBar>
  );
}

function PropertyValue({ id, value, kind }) {
  if (kind === "button") return <CellButton id={id}>{value}</CellButton>;
  if (kind === "check") return <Check id={id} type="checkbox" />;
  if (kind === "field") return <ScaleInput id={id} type="text" defaultValue={value} />;
  return value;
}

function Properties() {
  return (
    <PropertiesPanel>
      <PanelHeader>属性<PanelClose aria-label="关闭属性"><Icon name="close" size={12} color="#000" /></PanelClose></PanelHeader>
      <PanelBody>
        <TypeSelector>
          <TypeIcon><Icon name="floorPlan" size={32} /></TypeIcon>
          <span>楼层平面</span>
          <Caret $big />
        </TypeSelector>
        <FilterRow>
          <SelectWrap $w={178}>
            <InstanceSelect aria-label="实例"><option>楼层平面: 地下室</option></InstanceSelect>
            <Chevron viewBox="0 0 10 6"><path d="M1 1l4 4 4-4" /></Chevron>
          </SelectWrap>
          <EditType><Icon name="editType" />编辑类型</EditType>
        </FilterRow>
        <TableArea>
          <PropTable>
            <colgroup><col width="117" /><col width="116" /><col width="12" /></colgroup>
            {properties.map((s, si) => (
              <tbody key={s.title}>
                <tr>
                  <SectionHead colSpan="3" scope="rowgroup">
                    <SectionInner>{s.title}<Fold viewBox="0 0 7 9"><path d="M1 4l2.500-3L6 4M1 8l2.500-3L6 8" /></Fold></SectionInner>
                  </SectionHead>
                </tr>
                {s.rows.map(([name, value, kind], ri) => {
                  const id = `prop-${si}-${ri}`;
                  const control = kind && kind !== "off";
                  return (
                    <tr key={name}>
                      <PropName scope="row" $off={kind === "off"}>{control ? <label htmlFor={id}>{name}</label> : name}</PropName>
                      <PropCell $off={kind === "off"} $control={control}><PropertyValue id={id} value={value} kind={kind} /></PropCell>
                      <PropCell />
                    </tr>
                  );
                })}
              </tbody>
            ))}
          </PropTable>
          <PropScroll />
        </TableArea>
        <PropFooter>
          <a href="#help">属性帮助</a>
          <ApplyButton disabled>应用</ApplyButton>
        </PropFooter>
      </PanelBody>
    </PropertiesPanel>
  );
}

function Browser() {
  return (
    <BrowserPanel>
      <PanelHeader>项目浏览器 - 我的别墅.rvt<PanelClose aria-label="关闭浏览器"><Icon name="close" size={12} color="#000" /></PanelClose></PanelHeader>
      <BrowserBody>
        <Tree>
          {tree.map(([level, text, mark, icon], i) => {
            const next = tree[i + 1] ? tree[i + 1][0] : level;
            return (
              <TreeRow key={i}>
                {Array.from({ length: level + 1 }, (_, c) => (
                  <Guide key={c} $branch={c === level} $start={i === 0} $end={c > 0 && c === level && next < level}>
                    {c === level && mark && (
                      <Expander aria-label={mark === "+" ? "展开" : "折叠"}>
                        <svg width="7" height="7" stroke="#2040a0" shapeRendering="crispEdges"><path d={mark === "+" ? "M1 3.500H6M3.500 1V6" : "M1 3.500H6"} /></svg>
                      </Expander>
                    )}
                  </Guide>
                ))}
                {icon && <Icon name={icon} />}
                <TreeText $selected={i === 0} $bold={text === "地下室"}>{text}</TreeText>
              </TreeRow>
            );
          })}
        </Tree>
        <TreeScroll />
      </BrowserBody>
      <TreeBottom><span /></TreeBottom>
      <SideHandle><i /><i /><i /><i /><i /><i /><i /><b /><b /><b /></SideHandle>
    </BrowserPanel>
  );
}

const viewIcons = ["fine", "boxStyle", "sunOff", "shadowOff", "cropOff", "cropShow", "glasses", "bulb", "tempView", "constraint"];
const captureIcons = ["open", "cWindow", "cObject", "cRect", "cFree", "cFull", "cScroll", "cFixed", "cVideo"];

function DrawingArea() {
  return (
    <ViewPane>
      <ViewColumn>
        <Canvas>
          <FloorPlan />
          <MdiButtons>
            <button aria-label="最小化视图"><svg width="14" height="14" stroke="#555" fill="#fff"><path d="M1 6h11v3H1z" /></svg></button>
            <button aria-label="还原视图"><svg width="14" height="14" stroke="#555" fill="#fff"><path d="M4 1h8v8H4zM1 4h8v8H1zM4 7h2v2H4z" /></svg></button>
            <button aria-label="关闭视图"><svg width="14" height="14" stroke="#555" fill="#fff"><path d="M2 2h3l2 2 2-2h3v2L9 7l3 3v2H9l-2-2-2 2H2v-2l3-3-3-3z" /></svg></button>
          </MdiButtons>
          <NavBar>
            <NavRound>×</NavRound>
            <svg width="26" height="26" fill="#f2f2f2" stroke="#9a9a9a"><path d="M2 12C2 6 6 3 11 3h8v9c0 12-17 12-17 0z" /><circle cx="11" cy="12" r="5" /><circle cx="11" cy="12" r="3" /><text x="13" y="24" fontSize="9" fill="#5f86b0" stroke="none">2D</text></svg>
            <Caret $soft />
            <hr />
            <svg width="18" height="18" fill="#b4d2a0" stroke="#8aa878"><path d="M1 1h11v11H1z" /><circle cx="11" cy="11" r="4" fill="#eee" stroke="#999" /><path d="m14 14 3 3" stroke="#999" strokeWidth="2" /></svg>
            <Caret $soft />
            <NavRound>=</NavRound>
          </NavBar>
          <DetailMenu>
            <DetailItem><Icon name="coarse" />粗略</DetailItem>
            <DetailItem><Icon name="medium" />中等</DetailItem>
            <DetailItem $on><Icon name="fine" color="#9db7d4" />精细</DetailItem>
          </DetailMenu>
        </Canvas>
        <ViewControls>
          <ScaleText>1 : 100</ScaleText>
          {viewIcons.map((n, i) => <ViewButton key={n} $on={i === 0} aria-label={n}><Icon name={n} size={15} /></ViewButton>)}
          <ScrollTrack><span /></ScrollTrack>
        </ViewControls>
      </ViewColumn>
      <ViewSide>
        <span />
        <Grip viewBox="0 0 9 9"><path d="M7 1h2M4 4h2M7 4h2M1 7h2M4 7h2M7 7h2" /></Grip>
      </ViewSide>
    </ViewPane>
  );
}

function StatusBar() {
  return (
    <Status>
      <Ready>就绪</Ready>
      <StatusGroup>
        <Icon name="worker" />
        <SelectWrap $w={204}>
          <StatusSelect aria-label="工作集"><option></option></StatusSelect>
          <Chevron viewBox="0 0 10 6"><path d="M1 1l4 4 4-4" /></Chevron>
        </SelectWrap>
        <StatusItem><Icon name="flag" />:0</StatusItem>
        <Icon name="options" />
        <Icon name="grayPage" />
        <SelectWrap $w={204}>
          <StatusSelect aria-label="设计选项"><option>主模型</option></StatusSelect>
          <Chevron viewBox="0 0 10 6"><path d="M1 1l4 4 4-4" /></Chevron>
        </SelectWrap>
      </StatusGroup>
      <SelectIcons>
        {["selLink", "selUnder", "selPin", "selFace", "selDrag", "gear"].map((n) => (
          <Icon key={n} name={n} />
        ))}
        <StatusItem><Icon name="funnel" />:0</StatusItem>
      </SelectIcons>
      <Watermark>CSDN @刘一哥GIS</Watermark>
    </Status>
  );
}

export default function App() {
  return (
    <>
      <GlobalStyle />
      <Page>
        <TitleBar />
        <TabBar>
          <FileTab>文件</FileTab>
          {tabs.map((t) => <Tab key={t} $active={t === "视图"}>{t}</Tab>)}
          <TabToggle aria-label="最小化功能区">
            <svg width="16" height="9" fill="#f4f4f4" stroke={INK}><rect x="1" y="1" width="13" height="7" rx="2" /><path d="M6 5l2-2 2 2z" fill={INK} /></svg>
            <Caret />
          </TabToggle>
        </TabBar>
        <Ribbon />
        <Workspace>
          <Properties />
          <DrawingArea />
          <Browser />
        </Workspace>
        <StatusBar />
        <Capture>
          <CaptureTitle>
            <svg width="16" height="14"><path d="M0 12 12 0v12z" fill="#f00000" /><path d="M9 12V4l6 8z" fill="#10e010" /></svg>
            <span>FastStone Capture</span>
            <button aria-label="最小化"><Icon name="min" size={12} color="#000" /></button>
            <button aria-label="关闭"><Icon name="close" size={12} color="#000" /></button>
          </CaptureTitle>
          <CaptureBar>
            {captureIcons.map((n) => <button key={n} aria-label={n}><Icon name={n} color="#000" /></button>)}
            <i />
            <button aria-label="延时"><Icon name="cTimer" color="#000" /></button>
            <button aria-label="编辑器"><Icon name="cPalette" /></button>
            <Caret />
            <i />
            <button aria-label="设置"><Icon name="cSettings" /></button>
          </CaptureBar>
        </Capture>
        <Arrows fill={RED}>
          <path d="M214 140L240 405 236 406 246 421 252 403 247 404 216 140z" />
          <path d="M403 897L659 689 656 682 679 676 668 700 664 695 404 899z" />
        </Arrows>
      </Page>
    </>
  );
}

/* ---------- styles ---------- */

const GlobalStyle = createGlobalStyle`
  * { box-sizing: border-box; }
  body {
    margin: 0;
    overflow: hidden;
    background: #f5f5f5;
    color: #2d2d2d;
    font: 12px/16px "Noto Sans", "Noto Sans CJK SC", sans-serif;
  }
  button, input, select {
    margin: 0;
    padding: 0;
    border: 0;
    background: none;
    color: inherit;
    font: inherit;
  }
  svg { display: block; flex: none; }
`;

const Page = styled.div`
  position: relative;
  display: flex;
  flex-direction: column;
  height: 100vh;
`;

const Caret = styled.span`
  flex: none;
  border: solid transparent;
  border-width: ${(p) => (p.$big ? "4px 4px 0" : "3px 3px 0")};
  border-top-color: ${(p) => (p.$soft ? "#999" : "#3a3a3a")};
`;

const TopBar = styled.header`
  display: flex;
  align-items: center;
  height: 28px;
  padding-bottom: 6px;
  background: #d4d4d4;
`;

const Logo = styled.div`
  width: 28px;
  padding-left: 5px;
  color: #2a6fb0;
  font: 700 22px/22px "Liberation Sans", sans-serif;
`;

const LetterIcon = styled.span`
  color: ${INK};
  font: 700 18px/22px "Liberation Sans", sans-serif;
`;

const BarButton = styled.button`
  display: flex;
  flex: none;
  align-items: center;
  justify-content: center;
  width: ${(p) => p.$w}px;
  height: 22px;

  &:disabled {
    opacity: 0.45;
  }

  ${(p) =>
    p.$active &&
    css`
      border: 1px solid #1c6cc0;
      background: #bcd8f0;
    `}
`;

const BarLine = styled.span`
  width: 1px;
  height: 20px;
  margin-left: 3px;
  background: #b4b4b4;
`;

const Title = styled.div`
  display: flex;
  flex: 1;
  gap: 20px;
  justify-content: center;
  padding-right: 16px;
  font-size: 12px;
  white-space: pre;
`;

const SearchMark = styled.span`
  margin-right: 5px;
  border: solid transparent;
  border-width: 4px 0 4px 4px;
  border-left-color: #3a3a3a;
`;

const Search = styled.input`
  width: 180px;
  height: 22px;
  padding: 0 3px;
  border: 1px solid #000;
  background: #fff;
  font-style: italic;

  &::placeholder {
    color: #777;
    opacity: 1;
  }
`;

const SignIn = styled.button`
  width: 80px;
  text-align: left;
`;

const HelpMenu = styled(BarButton)`
  width: 12px;
  margin-right: 12px;
`;

const WindowButton = styled(BarButton)`
  width: 25px;
`;

const TabBar = styled.nav`
  display: flex;
  height: 20px;
  background: #d4d4d4;
`;

const Tab = styled.button`
  padding: 2px 10px 0;
  line-height: 18px;
  background: ${(p) => (p.$active ? "#f5f5f5" : "none")};
`;

const FileTab = styled(Tab)`
  padding: 2px 2px 0 1px;
  color: #fff;
`;

const TabToggle = styled.button`
  display: flex;
  gap: 5px;
  align-items: center;
  margin-left: 20px;
`;

const RibbonBar = styled.section`
  display: flex;
  height: 96px;
  border-bottom: 1px solid #d0d0d0;
  border-left: 1px solid #d8d8d8;
`;

const Group = styled.div`
  display: flex;
  flex-direction: column;
  border-right: ${(p) => (p.$last ? "0" : "1px solid #d8d8d8")};
`;

const Tools = styled.div`
  display: flex;
  height: 78px;
  padding-top: 2px;
`;

const GroupTitle = styled.div`
  display: flex;
  gap: 6px;
  align-items: center;
  justify-content: center;
  height: 17px;
  padding: 0 5px 0 0;

  ${(p) =>
    p.$launcher &&
    css`
      span {
        flex: 1;
        text-align: center;
      }
    `}
`;

const Launcher = styled.svg`
  width: 6px;
  height: 6px;
  fill: none;
  stroke: ${INK};
`;

const ToolButton = styled.button`
  display: flex;
  flex-direction: column;
  align-items: center;
  width: ${(p) => p.$w}px;
  height: 75px;
  padding-top: 4px;
  line-height: 17px;
  white-space: nowrap;

  > svg {
    margin-bottom: 3px;
  }

  &:disabled {
    color: #a8a8a8;

    > svg {
      opacity: 0.4;
    }
  }

  ${(p) =>
    p.$marked &&
    css`
      padding-top: 1px;
      border: 3px solid ${RED};
      background: #b4d6f4;
    `}
`;

const ToolText = styled.div`
  display: flex;
  gap: 3px;
  align-items: center;
  padding-left: ${(p) => (p.$side ? "9px" : "0")};
`;

const BelowCaret = styled.div`
  display: flex;
  padding-top: 3px;
`;

const Modify = styled.button`
  display: flex;
  flex-direction: column;
  align-items: center;
  width: 38px;
  height: 73px;
  margin: 1px 6px 0;
  padding-top: 2px;
  gap: 4px;
  border: 1px solid #1c6cc0;
  background: linear-gradient(#c4dcf4, #b0d2f2);
`;

const ToolList = styled.div`
  display: flex;
  flex-direction: column;
  gap: 8px;
  padding: 7px 10px 0 6px;
  border-right: 1px solid #d8d8d8;
`;

const SmallTool = styled.button`
  display: flex;
  gap: 5px;
  align-items: center;
`;

const Workspace = styled.main`
  display: flex;
  flex: 1;
  min-height: 0;
  padding-top: 24px;
`;

const PropertiesPanel = styled.aside`
  display: flex;
  flex: none;
  flex-direction: column;
  width: 266px;
  margin-right: 4px;
  background: #f0f0f0;
`;

const PanelHeader = styled.h2`
  display: flex;
  flex: none;
  align-items: center;
  justify-content: space-between;
  height: 18px;
  margin: 0 0 2px;
  padding: 0 4px;
  background: #bfcddb;
  color: #000;
  font-size: 12px;
  font-weight: 400;
`;

const PanelClose = styled.button`
  display: flex;
`;

const PanelBody = styled.div`
  display: flex;
  flex: 1;
  flex-direction: column;
  min-height: 0;
  border-top: 2px solid #808080;
  border-left: 2px solid #808080;
  color: #000;
`;

const TypeSelector = styled.div`
  display: flex;
  align-items: center;
  height: 72px;
  padding-right: 3px;
  border: 1px solid #c8c8c8;

  > span:last-child {
    margin-left: auto;
  }
`;

const TypeIcon = styled.div`
  display: grid;
  place-items: center;
  width: 66px;
  height: 66px;
  margin: 0 4px 0 2px;
  border: 1px solid #c8c8c8;
`;

const FilterRow = styled.div`
  display: flex;
  gap: 7px;
  align-items: center;
  height: 27px;
`;

const SelectWrap = styled.div`
  position: relative;
  width: ${(p) => p.$w}px;
`;

const InstanceSelect = styled.select`
  width: 100%;
  height: 24px;
  padding-left: 3px;
  border: 1px solid #e0e0e0;
  background: #fbfbfb;
  appearance: none;
`;

const Chevron = styled.svg`
  position: absolute;
  top: calc(50% - 3px);
  right: 4px;
  width: 9px;
  height: 6px;
  fill: none;
  stroke: #777;
  pointer-events: none;
`;

const EditType = styled.button`
  display: flex;
  gap: 5px;
  align-items: center;
`;

const TableArea = styled.div`
  display: flex;
  flex: 1;
  min-height: 0;
  overflow: hidden;
`;

const PropTable = styled.table`
  width: 245px;
  height: max-content;
  table-layout: fixed;
  border-spacing: 0;
  background: #fff;
`;

const SectionHead = styled.th`
  height: 20px;
  padding: 0;
  background: #dcdcdc;
  font-weight: 400;
`;

const SectionInner = styled.div`
  display: flex;
  align-items: center;
  justify-content: space-between;
  padding: 0 6px 0 2px;
`;

const Fold = styled.svg`
  width: 7px;
  height: 9px;
  fill: none;
  stroke: #000;
`;

const PropCell = styled.td`
  height: 20px;
  padding: ${(p) => (p.$control ? "0 1px" : "0 2px 2px")};
  overflow: hidden;
  border-right: 1px dotted #777;
  border-bottom: 1px dotted #777;
  color: ${(p) => (p.$off ? "#7c7c7c" : "#000")};
  font-weight: 400;
  line-height: 16px;
  text-align: left;
  white-space: nowrap;
`;

const PropName = styled(PropCell).attrs({ as: "th" })`
  padding: 0 0 2px 10px;
`;

const CellButton = styled.button`
  display: block;
  width: 100%;
  height: 17px;
  border: 1px solid #b8b8b8;
  border-bottom-width: 2px;
  border-radius: 4px;
  background: #fdfdfd;
  line-height: 14px;
`;

const Check = styled.input`
  display: block;
  width: 13px;
  height: 13px;
  margin-left: 2px;
  border: 1px solid #666;
  border-radius: 3px;
  background: #f3f3f3;
  appearance: none;
`;

const ScaleInput = styled.input`
  display: block;
  width: 100%;
  height: 19px;
  padding: 0 5px 2px;
  border: 1px solid #000;
`;

const PropScroll = styled.div`
  width: 2px;
  height: 570px;
  margin: 17px 0 0 8px;
  background: #868686;
`;

const PropFooter = styled.div`
  display: flex;
  align-items: center;
  justify-content: space-between;
  height: 25px;
  padding: 0 4px 2px 2px;

  a {
    color: #0066cc;
  }
`;

const ApplyButton = styled.button`
  width: 73px;
  height: 19px;
  border: 1px solid #dcdcdc;
  border-radius: 3px;
  color: #888;
`;

const ViewPane = styled.section`
  display: flex;
  flex: 1;
  min-width: 0;
  margin-right: 5px;
  border-top: 2px solid #808080;
  border-left: 2px solid #808080;
  background: #f0f0f0;
`;

const ViewColumn = styled.div`
  display: flex;
  flex: 1;
  flex-direction: column;
  min-width: 0;
`;

const Canvas = styled.div`
  position: relative;
  flex: 1;
  min-height: 0;
  background: #fff;
`;

const PlanSvg = styled.svg`
  position: absolute;
  width: 100%;
  height: 100%;
  overflow: hidden;
`;

const FlatLabel = styled.text`
  font: 700 13px "Noto Sans CJK SC", sans-serif;
`;

const TurnedLabel = styled.text`
  font: 14px "Noto Sans CJK SC", sans-serif;
`;

const BubbleText = styled.text`
  fill: #333;
  font: 20px "Liberation Serif", serif;
  text-anchor: middle;
`;

const MdiButtons = styled.div`
  position: absolute;
  top: 7px;
  right: 3px;
  display: flex;
  gap: 4px;
`;

const NavBar = styled.div`
  position: absolute;
  top: 28px;
  right: 1px;
  display: flex;
  flex-direction: column;
  align-items: center;
  gap: 7px;
  width: 35px;
  height: 118px;
  padding: 2px;
  border: 2px solid #c4c4c4;
  border-radius: 6px;
  background: #f3f3f3;

  hr {
    width: 26px;
    margin: 0;
    border: 0;
    border-top: 1px solid #c4c4c4;
  }
`;

const NavRound = styled.span`
  display: grid;
  place-items: center;
  align-self: flex-end;
  width: 9px;
  height: 9px;
  border-radius: 50%;
  background: #b0b0b0;
  color: #fff;
  font-size: 9px;
  line-height: 9px;
`;

const DetailMenu = styled.div`
  position: absolute;
  bottom: 0;
  left: 77px;
  width: 65px;
  border: 3px solid ${RED};
  background: #f0f0f0;
  box-shadow: 2px 2px 3px rgba(0, 0, 0, 0.4);
`;

const DetailItem = styled.button`
  display: flex;
  gap: 4px;
  align-items: center;
  width: 100%;
  height: 22px;
  padding: 0 0 1px 3px;
  background: ${(p) => (p.$on ? "#0078d7" : "none")};
  color: ${(p) => (p.$on ? "#fff" : "#000")};
`;

const ViewControls = styled.div`
  display: flex;
  align-items: center;
  height: 19px;
  padding-bottom: 2px;
`;

const ScaleText = styled.span`
  width: 78px;
  padding-left: 20px;
  color: #000;
`;

const ViewButton = styled.button`
  display: grid;
  place-items: center;
  width: 21px;
  height: 17px;
  background: ${(p) => (p.$on ? "#b8d8f4" : "none")};
`;

const ScrollTrack = styled.div`
  display: flex;
  flex: 1;
  justify-content: center;

  span {
    width: 16px;
    height: 2px;
    background: #868686;
  }
`;

const ViewSide = styled.div`
  display: flex;
  flex-direction: column;
  align-items: center;
  justify-content: space-between;
  width: 17px;
  padding: 401px 0 4px;

  span {
    width: 2px;
    height: 17px;
    background: #868686;
  }
`;

const Grip = styled.svg`
  width: 9px;
  height: 9px;
  stroke: #bcbcbc;
  stroke-width: 2px;
`;

const BrowserPanel = styled.aside`
  position: relative;
  display: flex;
  flex: none;
  flex-direction: column;
  width: 236px;
  background: #f0f0f0;
`;

const BrowserBody = styled.div`
  display: flex;
  flex: 1;
  min-height: 0;
  border-top: 2px solid #808080;
  border-left: 2px solid #808080;
`;

const Tree = styled.ul`
  flex: 1;
  margin: 0;
  padding: 0;
  overflow: hidden;
  background: #fff;
  color: #000;
  list-style: none;
`;

const TreeRow = styled.li`
  display: flex;
  align-items: center;
  height: 20px;
`;

const dots = (dir) => `repeating-linear-gradient(${dir}, #888 0 1px, transparent 1px 2px)`;

const Guide = styled.span`
  width: 20px;
  height: 20px;
  padding: 6px 0 0 4px;
  background:
    ${dots("to bottom")} 8px ${(p) => (p.$start ? "10px" : "0")} / 1px ${(p) => (p.$end ? "10px" : "20px")} no-repeat,
    ${dots("to right")} 8px 10px / ${(p) => (p.$branch ? "12px" : "0")} 1px no-repeat;
`;

const Expander = styled.button`
  display: block;
  width: 9px;
  height: 9px;
  border: 1px solid #8c8c8c;
  border-radius: 1px;
  background: #fff;
`;

const TreeText = styled.span`
  margin-left: 3px;
  padding: 0 3px;
  background: ${(p) => (p.$selected ? "#e2e2e2" : "none")};
  font-weight: ${(p) => (p.$bold ? 700 : 400)};
  line-height: 20px;
`;

const TreeScroll = styled.div`
  width: 2px;
  height: 233px;
  margin: 17px 8px 0 7px;
  background: #868686;
`;

const TreeBottom = styled.div`
  flex: none;
  height: 17px;
  padding: 8px 0 0 19px;

  span {
    display: block;
    width: 118px;
    height: 2px;
    background: #868686;
  }
`;

const SideHandle = styled.div`
  position: absolute;
  top: 475px;
  right: 0;
  display: flex;
  flex-direction: column;
  justify-content: flex-end;
  align-items: center;
  gap: 2px;
  width: 10px;
  height: 59px;
  padding: 6px 0;
  border-radius: 4px 0 0 4px;
  background: #4d5462;

  i,
  b {
    width: 4px;
    height: 2px;
    background: #2f3541;
  }

  b {
    background: #50e0b0;
  }
`;

const Status = styled.footer`
  position: relative;
  display: flex;
  align-items: center;
  justify-content: space-between;
  height: 23px;
  padding: 1px 60px 0 2px;
  border-top: 1px solid #909090;
  background: #d4d4d4;
  color: #000;
`;

const Ready = styled.span`
  width: 948px;
`;

const StatusGroup = styled.div`
  display: flex;
  flex: 1;
  gap: 8px;
  align-items: center;
`;

const StatusSelect = styled.select`
  display: block;
  width: 100%;
  height: 18px;
  padding-left: 2px;
  border: 1px solid #dcdcdc;
  background: #fff;
  color: #555;
  appearance: none;
`;

const StatusItem = styled.span`
  display: flex;
  gap: 4px;
  align-items: center;
  width: 46px;
`;

const SelectIcons = styled.div`
  display: flex;
  gap: 10px;
  align-items: center;

  ${StatusItem} {
    width: 30px;
  }
`;

const Watermark = styled.span`
  position: absolute;
  right: 14px;
  bottom: 8px;
  color: rgba(110, 110, 110, 0.6);
  font-size: 18px;
  line-height: 20px;
  text-shadow: 1px 1px 0 rgba(255, 255, 255, 0.7);
`;

const Capture = styled.section`
  position: absolute;
  top: 41px;
  right: 36px;
  width: 302px;
  border: 1px solid #b0b0b0;
  background: #fff;
  box-shadow: 3px 3px 4px rgba(0, 0, 0, 0.4);
`;

const CaptureTitle = styled.div`
  display: flex;
  align-items: center;
  height: 24px;
  padding: 0 2px 0 3px;
  background: linear-gradient(#fff, #d4d4dc);
  color: #000;

  span {
    flex: 1;
    margin-left: 3px;
    font: 11px/16px "DejaVu Sans Condensed", "DejaVu Sans", sans-serif;
  }

  button {
    display: flex;
    padding: 0 3px;
  }
`;

const CaptureBar = styled.div`
  display: flex;
  align-items: center;
  height: 26px;
  padding-left: 2px;
  border-top: 1px solid #a0b8d8;
  background: linear-gradient(#dceaff, #7cb0f4);

  button {
    display: grid;
    place-items: center;
    width: 23px;
    height: 22px;
  }

  i {
    width: 1px;
    height: 16px;
    margin: 0 3px;
    background: #fff;
  }
`;

const Arrows = styled.svg`
  position: absolute;
  inset: 0;
  width: 100%;
  height: 100%;
  pointer-events: none;
`;
